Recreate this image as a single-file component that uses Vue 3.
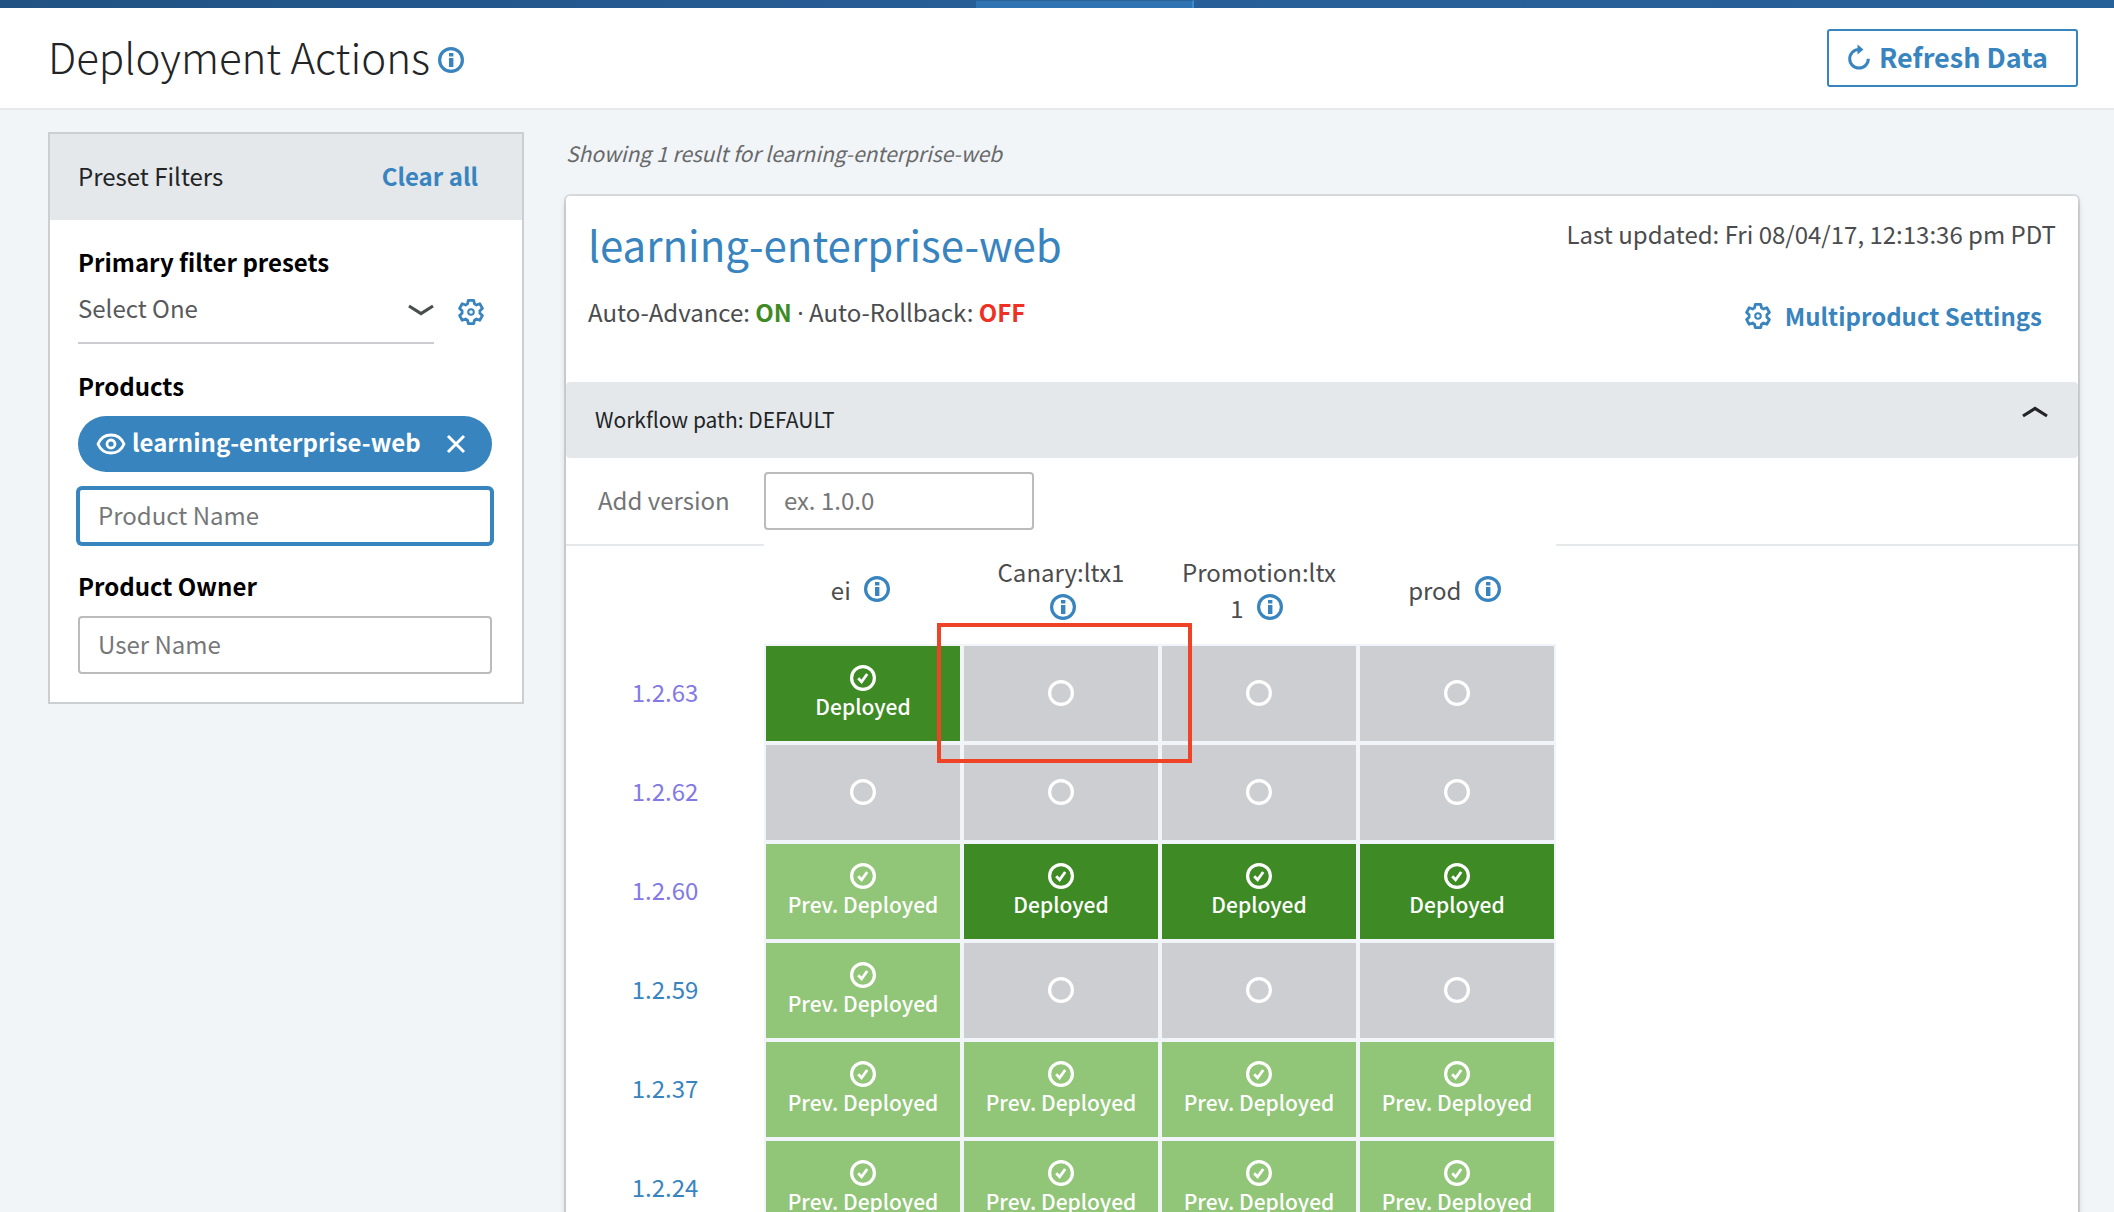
<script setup>
import { ref } from 'vue'

const preset = ref('')
const productName = ref('')
const userName = ref('')
const newVersion = ref('')

const stages = ['ei', 'Canary:ltx1', 'Promotion:ltx1', 'prod']

const labels = { deployed: 'Deployed', prev: 'Prev. Deployed', none: '' }

const rows = [
  { version: '1.2.63', visited: true, cells: ['deployed', 'none', 'none', 'none'] },
  { version: '1.2.62', visited: true, cells: ['none', 'none', 'none', 'none'] },
  { version: '1.2.60', visited: true, cells: ['prev', 'deployed', 'deployed', 'deployed'] },
  { version: '1.2.59', visited: false, cells: ['prev', 'none', 'none', 'none'] },
  { version: '1.2.37', visited: false, cells: ['prev', 'prev', 'prev', 'prev'] },
  { version: '1.2.24', visited: false, cells: ['prev', 'prev', 'prev', 'prev'] }
]
</script>

<template>
  <div class="page">
    <svg class="sprite" width="0" height="0" aria-hidden="true">
      <symbol id="i-info" viewBox="0 0 26 26">
        <circle cx="13" cy="13" r="11.4" fill="none" stroke="currentColor" stroke-width="3.2" />
        <path d="M11 6h4.4v3.4H11zM11 11h4.4v9H11z" fill="currentColor" />
      </symbol>
      <symbol id="i-gear" viewBox="0 0 26 26">
        <path d="M10.3 1.4h5.4l.8 3.5 1.9 1.1 3.4-1.2 2.6 4.6-2.5 2.3v2.6l2.5 2.3-2.6 4.6-3.4-1.2-1.9 1.1-.8 3.5h-5.4l-.8-3.5L7.6 20l-3.4 1.2-2.6-4.6 2.5-2.3v-2.6L1.6 9.4l2.6-4.6L7.6 6l1.9-1.1z" fill="none" stroke="currentColor" stroke-width="2.8" stroke-linejoin="round" />
        <circle cx="13" cy="13" r="2.8" fill="none" stroke="currentColor" stroke-width="2" />
      </symbol>
      <symbol id="i-check" viewBox="0 0 26 26">
        <circle cx="13" cy="13" r="11.4" fill="none" stroke="currentColor" stroke-width="3.2" />
        <path d="M8.2 13.2l3.4 3.6 5.6-7.8" fill="none" stroke="currentColor" stroke-width="2.8" />
      </symbol>
      <symbol id="i-ring" viewBox="0 0 26 26">
        <circle cx="13" cy="13" r="11.4" fill="none" stroke="currentColor" stroke-width="3.2" />
      </symbol>
      <symbol id="i-chevron" viewBox="0 0 26 12">
        <path d="M1 2L13 9.5 25 2" fill="none" stroke="currentColor" stroke-width="3.2" />
      </symbol>
    </svg>

    <div class="topbar"><span class="tab"></span></div>

    <header class="head">
      <h1>Deployment Actions</h1>
      <button class="icon-btn" type="button" aria-label="About deployment actions">
        <svg class="icon"><use href="#i-info" /></svg>
      </button>
      <button class="refresh" type="button">
        <svg class="refresh-icon" viewBox="0 0 24 28" aria-hidden="true">
          <path d="M12 6.5A9.3 9.3 0 1 0 21.3 15.8" fill="none" stroke="currentColor" stroke-width="3" />
          <path d="M10.5 1.5l6 5-6 5z" fill="currentColor" />
        </svg>
        Refresh Data
      </button>
    </header>

    <div class="body">
      <aside class="filters">
        <div class="filters-head">
          <span>Preset Filters</span>
          <button class="link-btn" type="button">Clear all</button>
        </div>
        <div class="filters-body">
          <div class="group">
            <label for="preset">Primary filter presets</label>
            <div class="preset-row">
              <div class="select-box">
                <select id="preset" v-model="preset">
                  <option value="">Select One</option>
                </select>
                <svg class="chevron"><use href="#i-chevron" /></svg>
              </div>
              <button class="icon-btn" type="button" aria-label="Preset settings">
                <svg class="icon"><use href="#i-gear" /></svg>
              </button>
            </div>
          </div>
          <div class="group spaced">
            <label for="product">Products</label>
            <div class="product-picker">
              <div class="pill">
                <svg class="eye" viewBox="0 0 30 22" aria-hidden="true">
                  <path d="M2 11C7-1 23-1 28 11 23 23 7 23 2 11z" fill="none" stroke="currentColor" stroke-width="2.8" />
                  <circle cx="15" cy="11" r="4" fill="none" stroke="currentColor" stroke-width="2.8" />
                </svg>
                <span>learning-enterprise-web</span>
                <button class="icon-btn remove" type="button" aria-label="Remove product">
                  <svg viewBox="0 0 20 20"><path d="M2 2l16 16M18 2L2 18" fill="none" stroke="currentColor" stroke-width="3" /></svg>
                </button>
              </div>
              <input id="product" v-model="productName" class="field active" type="text" placeholder="Product Name" />
            </div>
          </div>
          <div class="group spaced">
            <label for="owner">Product Owner</label>
            <input id="owner" v-model="userName" class="field" type="text" placeholder="User Name" />
          </div>
        </div>
      </aside>

      <main class="results">
        <p class="summary">Showing 1 result for learning-enterprise-web</p>
        <section class="card">
          <div class="card-head">
            <div class="card-info">
              <h2><a href="#product">learning-enterprise-web</a></h2>
              <p>Auto-Advance: <b class="on">ON</b> <span class="dot">·</span> Auto-Rollback: <b class="off">OFF</b></p>
            </div>
            <div class="card-meta">
              <p>Last updated: Fri 08/04/17, 12:13:36 pm PDT</p>
              <a class="settings" href="#settings">
                <svg class="icon"><use href="#i-gear" /></svg>
                Multiproduct Settings
              </a>
            </div>
          </div>

          <div class="workflow">
            <span>Workflow path: DEFAULT</span>
            <button class="icon-btn" type="button" aria-label="Collapse workflow">
              <svg class="chevron up"><use href="#i-chevron" /></svg>
            </button>
          </div>

          <div class="add-row">
            <label for="version">Add version</label>
            <input id="version" v-model="newVersion" class="field" type="text" placeholder="ex. 1.0.0" />
          </div>

          <div class="grid-wrap">
            <table>
              <colgroup>
                <col class="col" /><col v-for="s in stages" :key="s" class="col" /><col />
              </colgroup>
              <thead>
                <tr>
                  <td class="ruled"></td>
                  <th v-for="s in stages" :key="s" scope="col">
                    {{ s }} <button class="icon-btn stage-info" type="button" :aria-label="'About ' + s"><svg class="icon"><use href="#i-info" /></svg></button>
                  </th>
                  <td class="ruled"></td>
                </tr>
              </thead>
              <tbody>
                <tr v-for="r in rows" :key="r.version">
                  <th scope="row"><a :class="{ visited: r.visited }" :href="'#' + r.version">{{ r.version }}</a></th>
                  <td v-for="(c, i) in r.cells" :key="i" class="cell" :class="c">
                    <svg class="icon"><use :href="c === 'none' ? '#i-ring' : '#i-check'" /></svg>
                    <span v-if="labels[c]">{{ labels[c] }}</span>
                  </td>
                  <td></td>
                </tr>
              </tbody>
            </table>
            <div class="marker"></div>
          </div>
        </section>
      </main>
    </div>
  </div>
</template>

<style>
html {
  scrollbar-width: none;
}
body {
  margin: 0;
  background: #f1f5f8;
}
</style>

<style scoped>
.page {
  font-family: "Noto Sans CJK SC", "Noto Sans", sans-serif;
  font-size: 24px;
  line-height: 36px;
  color: #4b4c4e;
  min-height: 100vh;
  background: #f1f5f8;
}
.page * {
  box-sizing: border-box;
}
.sprite {
  position: absolute;
}
h1, h2, p {
  margin: 0;
  font-weight: 400;
}
a {
  color: #3884bf;
  text-decoration: none;
}
button, input, select {
  font: inherit;
  margin: 0;
}
button {
  border: 0;
  padding: 0;
  background: none;
  color: #3884bf;
}
.icon {
  display: block;
  width: 26px;
  height: 26px;
}
.icon-btn {
  display: block;
  line-height: 0;
}

/* top navigation strip */
.topbar {
  display: grid;
  grid-template-columns: 976fr 218fr 920fr;
  height: 8px;
  background: linear-gradient(90deg, #215283, #285f98 50%, #276199);
}
.tab {
  grid-column: 2;
  background: #2f73b2;
  border-top: 1px solid #286299;
  border-right: 2px solid #3c8bcc;
}

/* page header */
.head {
  display: flex;
  align-items: center;
  height: 102px;
  padding: 0 36px 0 48px;
  background: #fff;
  border-bottom: 2px solid #e6e8ea;
}
.head h1 {
  font-size: 42px;
  line-height: 64px;
  font-weight: 300;
  color: #222426;
  margin: 0 8px 4px 0;
}
.head .icon-btn {
  padding-top: 4px;
}
.refresh {
  display: flex;
  align-items: center;
  gap: 8px;
  height: 58px;
  margin-left: auto;
  padding: 0 28px 3px 18px;
  border: 2px solid #3884bf;
  border-radius: 3px;
  font-size: 27px;
  font-weight: 700;
}
.refresh-icon {
  width: 24px;
  height: 28px;
}

.body {
  display: flex;
  align-items: flex-start;
  gap: 42px;
  padding: 22px 36px 0 48px;
}

/* filter panel */
.filters {
  flex: 0 0 476px;
  background: #fff;
  border: 2px solid #cccfd2;
}
.filters-head {
  display: flex;
  justify-content: space-between;
  align-items: center;
  height: 86px;
  padding: 0 44px 3px 28px;
  background: #e4e8eb;
  color: #222426;
}
.link-btn {
  font-weight: 700;
}
.filters-body {
  padding: 23px 30px 28px 28px;
}
.group {
  display: flex;
  flex-direction: column;
}
.spaced {
  gap: 12px;
  margin-top: 23px;
}
.group label {
  padding-top: 1px;
  font-weight: 700;
  color: #000;
}
.preset-row {
  display: flex;
  align-items: center;
  gap: 24px;
}
.select-box {
  position: relative;
  flex: 0 0 356px;
}
.select-box select {
  display: block;
  width: 100%;
  height: 64px;
  padding: 0 40px 7px 0;
  border: 0;
  border-bottom: 2px solid #cccdd1;
  border-radius: 0;
  background: none;
  color: #58595b;
  appearance: none;
}
.chevron {
  display: block;
  width: 26px;
  height: 12px;
}
.select-box .chevron {
  position: absolute;
  right: 0;
  top: 24px;
  color: #4b4c4e;
  pointer-events: none;
}
.product-picker {
  display: grid;
  gap: 16px;
}
.pill {
  display: flex;
  align-items: center;
  height: 56px;
  padding: 0 26px 0 18px;
  border-radius: 28px;
  background: #3884bf;
  color: #fff;
  font-weight: 700;
}
.eye {
  width: 30px;
  height: 22px;
  margin-right: 6px;
}
.pill span {
  padding-bottom: 4px;
}
.remove {
  margin-left: auto;
  color: #fff;
}
.remove svg {
  width: 20px;
  height: 20px;
}
.field {
  width: 100%;
  height: 58px;
  padding: 0 18px 4px;
  border: 2px solid #bbb;
  border-radius: 4px;
  background: #fff;
  color: #4b4c4e;
  outline: none;
}
.field::placeholder {
  color: #767779;
  opacity: 1;
}
.active {
  height: 56px;
  border-color: #3884bf;
  box-shadow: 0 0 0 2px #3884bf;
}

/* result card */
.results {
  flex: 1;
  min-width: 0;
  padding-top: 5px;
}
.summary {
  margin-bottom: 27px;
  font-size: 21px;
  line-height: 32px;
  font-style: italic;
  color: #68696b;
}
.card {
  background: #fff;
  border-radius: 4px;
  box-shadow: 0 0 0 2px rgba(0, 0, 0, 0.1), 0 4px 6px rgba(0, 0, 0, 0.2);
}
.card-head {
  display: flex;
  justify-content: space-between;
  height: 186px;
  padding: 20px 22px 0;
}
.card-info h2 {
  font-size: 42px;
  line-height: 56px;
  margin-bottom: 22px;
}
.on {
  color: #3e8b25;
}
.off {
  color: #ee3124;
}
.dot {
  font-family: "Noto Sans", sans-serif;
  line-height: 1;
}
.card-meta {
  display: flex;
  flex-direction: column;
  align-items: flex-end;
  gap: 46px;
}
.settings {
  display: flex;
  gap: 14px;
  align-items: center;
  padding-right: 14px;
  font-weight: 700;
}
.workflow {
  display: flex;
  justify-content: space-between;
  align-items: center;
  height: 76px;
  padding: 0 30px 0 29px;
  background: #e4e8eb;
  border-radius: 4px;
  color: #222426;
  font-size: 21px;
}
.workflow span {
  padding-bottom: 2px;
}
.workflow .chevron {
  color: #222426;
  transform: rotate(180deg);
  margin-bottom: 16px;
}
.add-row {
  display: grid;
  grid-template-columns: 166px 270px;
  align-items: center;
  height: 86px;
  padding-left: 32px;
  color: #737476;
}
.add-row label {
  padding-bottom: 3px;
}

/* deployment grid */
.grid-wrap {
  position: relative;
}
table {
  width: 100%;
  table-layout: fixed;
  border-collapse: separate;
  border-spacing: 0;
}
.col {
  width: 198px;
}
th, td {
  padding: 0;
  font-weight: 400;
  text-align: center;
}
thead th {
  height: 100px;
  padding: 0 20px 9px;
  overflow-wrap: anywhere;
}
.ruled {
  border-top: 2px solid #e4e8eb;
}
.stage-info {
  display: inline-block;
  margin: 0 5px 0 8px;
  vertical-align: -2px;
}
tbody th, .cell {
  height: 99px;
}
tbody th {
  padding-bottom: 4px;
}
.visited {
  color: #8279e6;
}
.cell {
  padding-bottom: 2px;
  border: 2px solid #f1f5f9;
  color: #fff;
  font-size: 21px;
  line-height: 30px;
  font-weight: 500;
}
.cell .icon {
  margin: 0 auto;
}
.cell span {
  display: block;
}
.deployed {
  background: #3e8b25;
}
.prev {
  background: #91c578;
}
.none {
  background: #cdced2;
}

/* callout round the Canary cell of the newest version */
.marker {
  position: absolute;
  left: 371px;
  top: 79px;
  width: 255px;
  height: 140px;
  border: 4px solid #ee4327;
  pointer-events: none;
}
</style>
